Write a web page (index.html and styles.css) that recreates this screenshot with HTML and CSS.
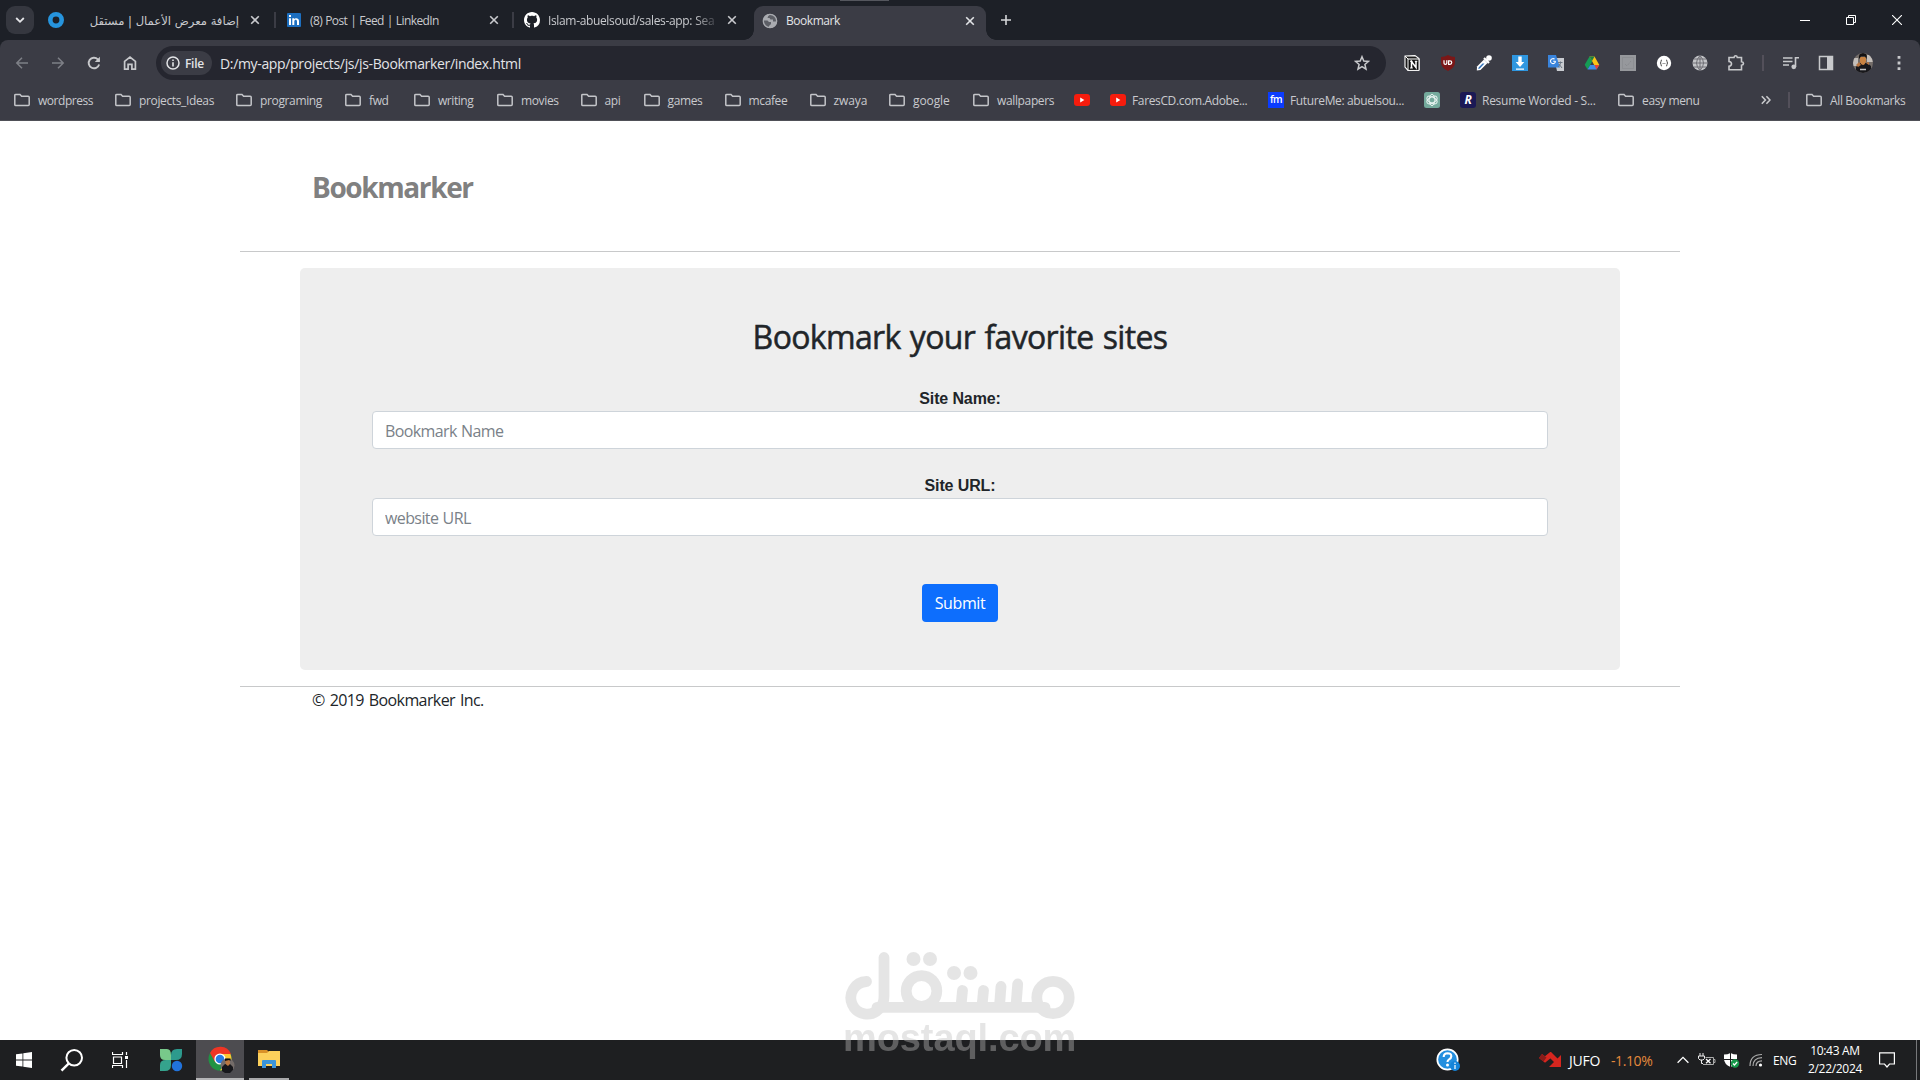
FILE: index.html
```html
<!DOCTYPE html>
<html lang="en">
<head>
<meta charset="utf-8">
<title>Bookmark</title>
<link rel="stylesheet" href="styles.css">
</head>
<body>
<svg class="defs" width="0" height="0">
  <symbol id="folder" viewBox="0 0 16 16"><path d="M.8 3.2V12.8Q.8 13.6 1.8 13.6H14.2Q15.200 13.6 15.200 12.6V5.200Q15.200 4.2 14.2 4.2H7.6L6 2.4H1.8Q.8 2.4 .8 3.2Z" fill="none" stroke="#c4c5c9" stroke-width="1.5"/></symbol>
  <symbol id="close" viewBox="0 0 10 10"><path d="M1.2 1.2L8.8 8.8M8.8 1.2L1.2 8.8" stroke="currentColor" stroke-width="1.6"/></symbol>
  <symbol id="youtube" viewBox="0 0 16 16"><rect y="2" width="16" height="12" rx="3" fill="#f61c0d"/><path d="M6.2 5.6V10.4L10.4 8Z" fill="#fff"/></symbol>
</svg>
<div class="screen">
  <header class="browser">
    <div class="tabs">
      <button class="tab-search"><svg width="10" height="8" viewBox="0 0 10 8"><path d="M1.2 2L5 5.8L8.8 2" fill="none" stroke="#e4e5e8" stroke-width="1.8"/></svg></button>
      <div class="tab tab-a">
        <svg width="16" height="16" viewBox="0 0 16 16"><circle cx="8" cy="8" r="5.7" fill="none" stroke="#2694dd" stroke-width="4.6"/></svg>
        <span class="tab-title rtl" dir="rtl">إضافة معرض الأعمال | مستقل</span>
        <svg class="x" width="10" height="10"><use href="#close"/></svg>
      </div>
      <div class="tab tab-b">
        <svg width="14" height="14" viewBox="0 0 14 14"><rect width="14" height="14" rx="1" fill="#1d6fc0"/><path d="M2 5.3H4V12H2ZM2 2H4V4H2ZM5.3 5.3H7.2V6.3C8.2 4.6 12 4.7 12 8V12H10V8.4C10 6.2 7.3 6.3 7.3 8.4V12H5.3Z" fill="#fff"/></svg>
        <span class="tab-title t-linkedin">(8) Post | Feed | LinkedIn</span>
        <svg class="x" width="10" height="10"><use href="#close"/></svg>
      </div>
      <div class="tab tab-c">
        <svg width="16" height="16" viewBox="0 0 16 16"><path fill="#fff" d="M8 0C3.58 0 0 3.58 0 8c0 3.54 2.29 6.53 5.47 7.59.4.07.55-.17.55-.38 0-.19-.01-.82-.01-1.49-2.01.37-2.53-.49-2.69-.94-.09-.23-.48-.94-.82-1.13-.28-.15-.68-.52-.01-.53.63-.01 1.08.58 1.23.82.72 1.21 1.87.87 2.33.66.07-.52.28-.87.51-1.07-1.78-.2-3.64-.89-3.64-3.95 0-.87.31-1.59.82-2.15-.08-.2-.36-1.02.08-2.12 0 0 .67-.21 2.2.82.64-.18 1.32-.27 2-.27s1.36.09 2 .27c1.53-1.04 2.2-.82 2.2-.82.44 1.1.16 1.92.08 2.12.51.56.82 1.27.82 2.15 0 3.07-1.87 3.75-3.65 3.95.29.25.54.73.54 1.48 0 1.07-.01 1.93-.01 2.2 0 .21.15.46.55.38A8.01 8.01 0 0 0 16 8c0-4.42-3.58-8-8-8Z"/></svg>
        <span class="tab-title t-github">Islam-abuelsoud/sales-app: Sea</span>
        <svg class="x" width="10" height="10"><use href="#close"/></svg>
      </div>
      <div class="tab tab-active">
        <svg width="16" height="16" viewBox="0 0 16 16"><circle cx="8" cy="8" r="7" fill="#a9abb0"/><path d="M8.500 1.200Q5.500 3 5.500 5H7.500L8.500 6.500H11V8.500H13.500L15 8A7 7 0 0 0 9 1.100Z" fill="#5d5f66"/><path d="M1.200 7.500H5.500L7 9H9V11L7 13V15A7 7 0 0 1 1.200 7.500Z" fill="#5d5f66"/><circle cx="8" cy="8" r="6.700" fill="none" stroke="#a9abb0" stroke-width="1.300"/></svg>
        <span class="tab-title t-active">Bookmark</span>
        <svg class="x" width="10" height="10"><use href="#close"/></svg>
      </div>
      <svg class="new-tab" width="12" height="12" viewBox="0 0 12 12"><path d="M6 1V11M1 6H11" stroke="#d5d6d9" stroke-width="1.6"/></svg>
      <div class="window-buttons">
        <svg width="10" height="10"><path d="M0 5.5H10" stroke="#fff"/></svg>
        <svg width="10" height="10"><path d="M.5 2.5H7.5V9.5H.5ZM2.5 2.5V.5H9.5V7.5H7.5" fill="none" stroke="#fff"/></svg>
        <svg width="10" height="10"><path d="M0 0L10 10M10 0L0 10" stroke="#fff" stroke-width="1.1"/></svg>
      </div>
      <i class="grip"></i>
    </div>
    <div class="toolbar">
      <nav class="nav">
        <svg width="16" height="16" viewBox="0 0 16 16"><path d="M14 8H3M8 2.8L2.8 8L8 13.2" fill="none" stroke="#7e8087" stroke-width="1.5"/></svg>
        <svg width="16" height="16" viewBox="0 0 16 16"><path d="M2 8H13M8 2.8L13.2 8L8 13.2" fill="none" stroke="#7e8087" stroke-width="1.5"/></svg>
        <svg width="16" height="16" viewBox="0 0 16 16"><path d="M13.1 9.4A5.3 5.3 0 1 1 11.8 4.3L13.3 5.8" fill="none" stroke="#c8c9cc" stroke-width="1.9"/><path d="M13.9 1.8V6.9H8.8Z" fill="#c8c9cc"/></svg>
        <svg width="16" height="16" viewBox="0 0 16 16"><path d="M2.6 6.3L8 2L13.4 6.3V14.2H9.9V9.4H6.1V14.2H2.6Z" fill="none" stroke="#c8c9cc" stroke-width="1.7"/></svg>
      </nav>
      <div class="address">
        <span class="chip"><svg width="14" height="14" viewBox="0 0 14 14"><circle cx="7" cy="7" r="6" fill="none" stroke="#e3e4e7" stroke-width="1.5"/><path d="M7 6.2V10.4M7 3.5V5" stroke="#e3e4e7" stroke-width="1.6"/></svg><b>File</b></span>
        <span class="url">D:/my-app/projects/js/js-Bookmarker/index.html</span>
        <svg class="star" width="16" height="16" viewBox="0 0 16 16"><path d="M8 1.7L9.8 6L14.5 6.4L10.9 9.5L12 14.1L8 11.6L4 14.1L5.1 9.5L1.5 6.4L6.2 6Z" fill="none" stroke="#c8c9cc" stroke-width="1.5"/></svg>
      </div>
      <div class="extensions">
        <svg width="16" height="16" viewBox="0 0 16 16"><path d="M1 1L11 .6L15 3.500V15L4 15.400L1 12Z" fill="#1b1b1b" stroke="#fff" stroke-width="1.1"/><path d="M1 1L4 4H15V15.400H4V4" fill="#111" stroke="#fff"/><path d="M7.500 13V6.5L12 12.5V6" stroke="#fff" stroke-width="1.5" fill="none"/><path d="M6 6.300H8.500M10.800 6.300H13.300M6 13H8.800" stroke="#fff"/></svg>
        <svg width="16" height="16" viewBox="0 0 16 16"><path d="M8 0Q11 2 15 2V7Q15 13 8 16Q1 13 1 7V2Q5 2 8 0Z" fill="#7b1717"/><path d="M4 5.3V8.3Q4 9.3 5.400 9.3Q6.8 9.3 6.8 8.3V5.3M8.600 5.800H10A1.700 1.700 0 0 1 10 9.300H8.600Z" fill="none" stroke="#fff" stroke-width="1.2"/></svg>
        <svg width="16" height="16" viewBox="0 0 16 16"><path d="M8 4.500L11.500 8L4.500 15L.8 15.600L1 11.500Z" fill="#fff"/><path d="M6.500 8.500H8.500L3.800 13.500L2.300 14L2.600 12.4Z" fill="#2f70b8"/><path d="M8 3L13 8M9.8 6.2L13.5 2.5" stroke="#fff" stroke-width="2.200"/><circle cx="13" cy="3" r="2.8" fill="#fff"/></svg>
        <svg width="16" height="16" viewBox="0 0 16 16"><path fill="#2f97e0" d="M0 0H16V16H0Z"/><path d="M6.300 1.500H9.700V7H12.300L8 12L3.700 7H6.300ZM4 13.500H12V14.700H4Z" fill="#fff"/></svg>
        <svg width="16" height="16" viewBox="0 0 16 16"><path d="M6 3H16V16H9Z" fill="#c9ccd1"/><path d="M0 0H8L12 12.500H0Z" fill="#3984dc"/><path d="M7.500 6.200H5.200M7.500 6.200A2.5 2.5 0 1 1 6.600 4.200" fill="none" stroke="#fff" stroke-width="1.1"/><path d="M10 7.500H14.5M12.5 6.500V8Q12 11 10 12M11 9L14 13" stroke="#6b7683" fill="none"/></svg>
        <svg width="16" height="16" viewBox="0 0 16 16"><path d="M5.5 1.500L8.2 6.5L3.5 14.5L.7 9.8Z" fill="#159c55"/><path d="M5.5 1.500H10.5L15.3 10H10.200Z" fill="#fbc316"/><path d="M5.500 1.500H10.500L8 6Z" fill="#1b8046"/><path d="M6.2 10H15.3L12.5 14.5H3.5Z" fill="#3f8de8"/><path d="M10.5 10H15.3L12.5 14.5Z" fill="#e94235"/></svg>
        <svg width="16" height="16" viewBox="0 0 16 16"><path fill="#96989c" d="M0 0H16V16H0Z"/><path d="M2.5 2.5H13.5V13.5H2.5ZM5 9L7 11L11 6" stroke="#85878b" fill="none" stroke-dasharray="1 1"/></svg>
        <svg width="16" height="16" viewBox="0 0 16 16"><circle cx="8" cy="8" r="7.2" fill="#fff"/><path d="M6 5Q4.8 5 5 6.5Q5 8 4 8Q5 8 5 9.5Q4.8 11 6 11M10 5Q11.2 5 11 6.5Q11 8 12 8Q11 8 11 9.5Q11.2 11 10 11M6.700 8.500H7.500M8.500 8.500H9.300" fill="none" stroke="#444"/></svg>
        <svg width="16" height="16" viewBox="0 0 16 16"><circle cx="8" cy="8" r="7.5" fill="#c3c4c7"/><path d="M8 0V16M0 8H16M2 4H14M2 12H14M8 .5Q1 8 8 15.5Q15 8 8 .5" fill="none" stroke="#66686e" stroke-width=".9"/></svg>
        <svg width="18" height="18" viewBox="0 0 18 18"><path d="M2 3.500H7Q7.3 1.8 8.7 1.8Q10 1.8 10.3 3.500H14.500V7.800Q16.500 8 16.500 9.500Q16.500 11 14.500 11.200V15.800H2V12.3Q4.500 12 4.500 9.800Q4.500 7.800 2 7.5Z" fill="none" stroke="#c8c9cc" stroke-width="1.6"/></svg>
      </div>
      <i class="sep sep-tools"></i>
      <div class="profile">
        <svg width="16" height="16" viewBox="0 0 16 16"><path d="M0 3H9.5M0 6.5H9.5M0 10H6M12.500 12V2.8H16" stroke="#c8c9cc" stroke-width="1.6" fill="none"/><circle cx="10.8" cy="11.8" r="2.4" fill="#c8c9cc"/></svg>
        <svg width="16" height="16" viewBox="0 0 16 16"><path d="M1.5 1.5H14.5V14.5H1.5Z" fill="none" stroke="#c8c9cc" stroke-width="1.5"/><path d="M9 1H15V15H9Z" fill="#c8c9cc"/></svg>
        <svg class="avatar" width="20" height="20" viewBox="0 0 20 20"><path fill="#746d69" d="M0 0H20V20H0Z"/><path d="M0 5H5V13H0ZM14 2H20V9H14Z" fill="#c4bfbb"/><path d="M3 20V14L7 10H14L18 13V20Z" fill="#17171b"/><path d="M7 4H13V8Q12 12 10 12Q7 11 7 8Z" fill="#c98342"/><path d="M6 6Q5 0 10 0Q15 0 13.5 6L12 3.6H8Z" fill="#141212"/><path d="M3 12L6 9L8 12L5 14ZM13 10L16 9L16 12Z" fill="#b87440"/><path d="M7 16.500H13" stroke="#c2c2c2" stroke-width="1.300"/></svg>
        <svg class="dots" width="4" height="16" viewBox="0 0 4 16"><path d="M.6 1H3.4V3.8H.6ZM.6 6.6H3.4V9.4H.6ZM.6 12.2H3.4V15H.6Z" fill="#c8c9cc"/></svg>
      </div>
    </div>
    <div class="bookmarks">
      <div class="bookmark-list">
        <a><svg><use href="#folder"/></svg><span class="tight">wordpress</span></a>
        <a><svg><use href="#folder"/></svg><span>projects_Ideas</span></a>
        <a><svg><use href="#folder"/></svg><span>programing</span></a>
        <a><svg><use href="#folder"/></svg><span>fwd</span></a>
        <a><svg><use href="#folder"/></svg><span class="tight">writing</span></a>
        <a><svg><use href="#folder"/></svg><span>movies</span></a>
        <a><svg><use href="#folder"/></svg><span>api</span></a>
        <a><svg><use href="#folder"/></svg><span>games</span></a>
        <a><svg><use href="#folder"/></svg><span>mcafee</span></a>
        <a><svg><use href="#folder"/></svg><span class="roomy">zwaya</span></a>
        <a><svg><use href="#folder"/></svg><span class="roomy">google</span></a>
        <a><svg><use href="#folder"/></svg><span>wallpapers</span></a>
        <a><svg><use href="#youtube"/></svg></a>
        <a class="site"><svg><use href="#youtube"/></svg><span>FaresCD.com.Adobe...</span></a>
        <a class="site"><em class="fm">fm</em><span>FutureMe: abuelsou...</span></a>
        <a><svg viewBox="0 0 16 16"><rect width="16" height="16" rx="2.5" fill="#74aa9c"/><g fill="none" stroke="#e8f3f0" stroke-width="1"><ellipse cx="8" cy="8" rx="2.9" ry="5.6"/><ellipse cx="8" cy="8" rx="2.9" ry="5.6" transform="rotate(60 8 8)"/><ellipse cx="8" cy="8" rx="2.9" ry="5.6" transform="rotate(120 8 8)"/></g></svg></a>
        <a class="site"><em class="rw">R</em><span class="resume">Resume Worded - S...</span></a>
        <a><svg><use href="#folder"/></svg><span>easy menu</span></a>
      </div>
      <svg class="more" width="10" height="10" viewBox="0 0 10 10"><path d="M.8 1.2L4.4 5L.8 8.8M5.4 1.2L9 5L5.4 8.8" fill="none" stroke="#c8c9cc" stroke-width="1.6"/></svg>
      <i class="sep sep-marks"></i>
      <a class="all"><svg><use href="#folder"/></svg><span>All Bookmarks</span></a>
    </div>
  </header>

  <main class="page">
    <div class="container">
      <div class="masthead"><h3>Bookmarker</h3></div>
      <form class="panel">
        <h2>Bookmark your favorite sites</h2>
        <label for="name">Site Name:</label>
        <input id="name" type="text" placeholder="Bookmark Name">
        <label for="url">Site URL:</label>
        <input id="url" type="text" placeholder="website URL">
        <button type="button" class="submit">Submit</button>
      </form>
      <footer><p>© 2019 Bookmarker Inc.</p></footer>
    </div>
  </main>

  <div class="taskbar">
    <div class="apps">
      <span><svg width="16" height="16" viewBox="0 0 16 16"><path d="M0 2.3L6.5 1.4V7.6H0ZM7.3 1.3L16 0V7.6H7.3ZM0 8.4H6.5V14.6L0 13.7ZM7.3 8.4H16V16L7.3 14.7Z" fill="#fff"/></svg></span>
      <span><svg width="24" height="24" viewBox="0 0 24 24"><circle cx="14.2" cy="9.8" r="7.8" fill="none" stroke="#fff" stroke-width="2"/><path d="M8.6 15.6L1.5 22.7" stroke="#fff" stroke-width="2.4"/></svg></span>
      <span><svg width="16" height="16" viewBox="0 0 16 16"><path d="M.5 0V2.5H10.5V0M1.5 5H9.5V11.5H1.5ZM.5 16V13.5H10.5V16M14.5 0V3M14.5 8V16" fill="none" stroke="#fff" stroke-width="1.2"/><path d="M13 4H16V7H13Z" fill="#fff"/></svg></span>
      <span><svg width="24" height="24" viewBox="0 0 24 24"><path d="M1 1H8Q12 1 12 7V12H6Q1 12 1 7Z" fill="#78c98a"/><path d="M23 1V6Q23 12 17 12H12V7Q12 1 18 1Z" fill="#2d9a8d"/><path d="M1 23V17Q1 12 7 12H12V17Q12 23 6 23Z" fill="#35a38d"/><circle cx="18" cy="18" r="5.2" fill="#2173dc"/></svg></span>
      <span class="current"><svg width="28" height="28" viewBox="0 0 28 28"><circle cx="13" cy="13" r="11.5" fill="#209344"/><path d="M3 7A11.5 11.5 0 0 1 24 8H13L8 16Z" fill="#ee3525"/><path d="M13 8H23.4A11.5 11.5 0 0 1 13 24.5L18 16Z" fill="#fac633"/><circle cx="13" cy="13" r="5.6" fill="#fff"/><circle cx="13" cy="13" r="4.3" fill="#287ce5"/><circle cx="20.5" cy="19.5" r="7" fill="#746c69"/><path d="M15 25V21L18 18H23L26 21V24L23 27H18Z" fill="#17171b"/><path d="M18.5 14H23V18L21 20L18.5 18Z" fill="#ba773f"/><path d="M18 15V12.5H23.5V15L22 14Z" fill="#151212"/></svg></span>
      <span class="open"><svg width="22" height="20" viewBox="0 0 22 20"><path d="M0 1H9L11 3V8H0Z" fill="#d99128"/><path d="M0 4H9L11 2H22V17H0Z" fill="#fcd05b"/><path d="M4 19V12Q4 11 5 11H17Q18 11 18 12V19H14V15H8V19Z" fill="#3b94d9"/></svg></span>
    </div>
    <div class="tray">
      <svg class="help" width="24" height="24" viewBox="0 0 24 24"><circle cx="11.5" cy="11.5" r="10.2" fill="#248fdf" stroke="#fff" stroke-width="1.7"/><path d="M7.7 9Q7.7 5.2 11.5 5.2Q15.4 5.3 15.3 8.4Q15.2 10.5 12.8 11.6Q11.5 12.4 11.5 14" fill="none" stroke="#fff" stroke-width="2.1"/><circle cx="11.5" cy="17" r="1.5" fill="#fff"/><circle cx="19" cy="18" r="5" fill="#1684d9"/><path d="M19 17V21M19 14.6V16" stroke="#fff" stroke-width="1.2"/></svg>
      <svg class="stock" width="24" height="16" viewBox="0 0 24 16"><path d="M2.500 4L7 7.500L12.500 3L19 9.500" fill="none" stroke="#d5261f" stroke-width="5"/><path d="M2.500 4L7 7.500" stroke="#861c1a" stroke-width="5"/><path d="M23 3V15H11Z" fill="#d5261f"/></svg>
      <span class="ticker">JUFO</span><span class="change">-1.10%</span>
      <svg class="up" width="12" height="8" viewBox="0 0 12 8"><path d="M.6 6.8L6 1.4L11.4 6.8" stroke="#fff" fill="none" stroke-width="1.3"/></svg>
      <svg class="battery" width="18" height="14" viewBox="0 0 18 14"><path d="M2 0V3M5 0V3M.5 3H6.5V5.5L5 7H2L.5 5.5ZM3.5 7V10.500H5" stroke="#eee" fill="none"/><path d="M7.5 4.5H15.5V11.500H5M15.5 6.5H17V9.5H15.5" stroke="#aaa" fill="none"/><path d="M8 6L12.5 10.300M12.5 6L8 10.300" stroke="#fff" stroke-width="1.200"/></svg>
      <svg class="shield" width="17" height="17" viewBox="0 0 17 17"><path d="M7.5 1Q10.5 2.6 14 2.6V7Q14 12 7.5 15Q1 12 1 7V2.6Q4.5 2.6 7.5 1Z" fill="#fff"/><path d="M7.5 1V15M1 7.5H14" stroke="#1c1d1f"/><circle cx="12" cy="11.5" r="4.2" fill="#16984a"/><path d="M10 11.5L11.4 13L14.2 10" stroke="#fff" fill="none" stroke-width="1.2"/></svg>
      <svg class="wifi" width="14" height="14" viewBox="0 0 14 14"><path d="M1 13Q1 1.5 13 1.5M4 13Q4 5 13 4.7M7 13Q7 8 13 7.8" stroke="#aaa" fill="none" stroke-width="1.2"/><circle cx="11.5" cy="12" r="1.6" fill="#fff"/></svg>
      <span class="lang">ENG</span>
      <div class="clock"><span>10:43 AM</span><span>2/22/2024</span></div>
      <svg class="notice" width="16" height="16" viewBox="0 0 16 16"><path d="M.6.8H15.4V12H10.5L8 15L5.5 12H.6Z" stroke="#fff" fill="none" stroke-width="1.2"/></svg>
      <i class="desktop-edge"></i>
    </div>
  </div>

  <div class="watermark">
    <svg width="230" height="68" viewBox="0 0 230 68"><g fill="none" stroke="#c0c0c0" stroke-width="10.8" stroke-linecap="round" stroke-linejoin="round"><path d="M21.5 29.5A16.3 16.3 0 1 0 34 57Q39 53 39 44V5.5"/><path d="M32 55.4H200"/><circle cx="76.5" cy="39" r="15.3"/><circle cx="208" cy="45.5" r="16.2"/><path d="M116 54L117.5 38.5M137 54L138.5 38.5M154.500 54L156 34.500M171 54L172.700 32"/></g><g fill="#c0c0c0"><circle cx="68.500" cy="7" r="7"/><circle cx="85" cy="7" r="7"/><circle cx="109" cy="21" r="7"/><circle cx="125.500" cy="21" r="7"/></g></svg>
    <span>mostaql.com</span>
  </div>
</div>
</body>
</html>
```
FILE: styles.css
```css
* { box-sizing: border-box; }
body { margin: 0; background: #fff; font-family: "Open Sans", "Noto Sans", sans-serif; }
svg { display: block; flex: none; }
.defs { position: absolute; }
.screen { position: relative; width: 1920px; height: 1080px; overflow: hidden; display: flex; flex-direction: column; }

/* browser frame */
.browser { height: 121px; flex: none; background: #1d2027; border-bottom: 1px solid #4f5057; font-size: 12px; color: #c9cace; }
.tabs { position: relative; height: 40px; display: flex; align-items: center; }
.tab-search { width: 28px; height: 28px; margin: 0 8px 0 6px; padding: 0; border: 0; border-radius: 9px; background: #35373f; display: grid; place-items: center; }
.tab { display: flex; align-items: center; height: 16px; }
.tab-title { white-space: nowrap; line-height: 18px; padding-top: 1px; letter-spacing: -.6px; word-spacing: .5px; color: #c9cace; }
.x { margin-left: auto; color: #c9cace; }
.tab-a { width: 234px; padding: 0 14px 0 6px; border-right: 2px solid #3b3c45; }
.rtl { width: 156px; margin-left: 19px; font-family: "DejaVu Sans", sans-serif; font-size: 11.6px; letter-spacing: 0; word-spacing: 0; }
.tab-b { width: 238px; padding: 0 13px 0 11px; border-right: 2px solid #3b3c45; }
.t-linkedin { margin-left: 9px; }
.tab-c { width: 240px; padding: 0 17px 0 10px; }
.t-github { margin-left: 8px; letter-spacing: -.35px; mask-image: linear-gradient(90deg, #000 88%, rgba(0, 0, 0, .25)); }
.tab-active { position: relative; width: 232px; height: 34px; align-self: flex-end; padding: 0 11px 4px 8px; border-radius: 9px 9px 0 0; background: #3b3c45; }
.tab-active::before, .tab-active::after { content: ""; position: absolute; bottom: 0; width: 10px; height: 10px; }
.tab-active::before { left: -10px; background: radial-gradient(circle at 0 0, #1d2027 9.5px, #3b3c45 10px); }
.tab-active::after { right: -10px; background: radial-gradient(circle at 100% 0, #1d2027 9.5px, #3b3c45 10px); }
.t-active { margin-left: 8px; padding: 0; color: #e3e4e7; letter-spacing: -.45px; }
.tab-active .x { color: #e3e4e7; }
.new-tab { margin-left: 14px; }
.window-buttons { display: flex; gap: 36px; margin: 0 18px 0 auto; }
.grip { position: absolute; left: 840px; top: 0; width: 49px; height: 1px; background: #55575e; }
.toolbar { height: 46px; background: #3b3c45; border-radius: 8px 8px 0 0; display: flex; align-items: center; }
.nav { display: flex; gap: 20px; margin-left: 14px; width: 142px; }
.address { width: 1230px; height: 34px; border-radius: 17px; background: #25262f; display: flex; align-items: center; padding: 0 16px 0 5px; }
.chip { width: 51px; height: 24px; border-radius: 12px; background: #3b3c45; display: flex; align-items: center; gap: 5px; padding-left: 5px; color: #e3e4e7; }
.chip b { font-weight: 600; letter-spacing: -.3px; }
.url { margin-left: 8px; font-size: 14px; letter-spacing: -.34px; color: #e3e4e7; white-space: nowrap; }
.star { margin-left: auto; }
.extensions { display: flex; gap: 20px; align-items: center; margin-left: 18px; }
.extensions svg:last-child { margin-left: -1px; }
.sep { width: 2px; height: 16px; background: #53505a; }
.sep-tools { margin-left: 17px; }
.profile { display: flex; align-items: center; margin-left: 19px; gap: 19px; }
.avatar { border-radius: 50%; }
.dots { margin-left: 5px; }
.bookmarks { height: 34px; padding-bottom: 6px; background: #3b3c45; display: flex; align-items: center; }
.bookmarks a { display: flex; align-items: center; gap: 8px; white-space: nowrap; letter-spacing: -.36px; }
.bookmarks .roomy { letter-spacing: -.1px; }
.bookmarks .tight { letter-spacing: -.45px; }
.bookmarks .resume { letter-spacing: -.27px; }
.bookmarks a svg { width: 16px; height: 16px; }
.bookmarks a.site { gap: 6px; }
.bookmark-list { margin-left: 14px; width: 1747px; display: grid; grid-template-columns: 101px 121px 109px 69px 83px 83.5px 63px 81px 85px 79.5px 84px 101px 36px 158px 156px 36px 158px 100px; }
.bookmarks em { width: 16px; height: 16px; flex: none; text-align: center; font: 700 10px/15px "Open Sans", sans-serif; color: #fff; }
.bookmarks .fm { background: #0b3cff; font-weight: 600; letter-spacing: -.5px; }
.bookmarks .rw { background: #1b1955; border-radius: 3px; font-style: italic; font-size: 12px; }
.sep-marks { margin: 0 16px 0 17px; }

/* document */
.page { height: 919px; flex: none; background: #fff; color: #212529; }
.container { width: 1440px; margin: 0 auto; }
.masthead { height: 131px; border-bottom: 1px solid #c8c9ca; padding: 46px 72px 0; }
h3 { margin: 0; font-size: 28px; line-height: 40px; font-weight: 700; letter-spacing: -1.4px; color: #808080; }
.panel { margin: 16px 60px; height: 402px; background: #eee; border-radius: 5px; padding: 48px 72px; display: flex; flex-direction: column; align-items: center; }
h2 { margin: 0 0 29px; font-size: 32px; line-height: 42px; font-weight: 500; letter-spacing: -.65px; word-spacing: 1.5px; -webkit-text-stroke: .5px #212529; white-space: nowrap; }
label { font: 700 16px/23px "Liberation Sans", Arial, sans-serif; letter-spacing: -.12px; }
input { width: 100%; height: 38px; margin: 1px 0 25px; padding: 7px 12px 5px; border: 1px solid #ced4da; border-radius: 4px; background: #fff; font: 16px/24px "Open Sans", sans-serif; letter-spacing: -.6px; word-spacing: .7px; }
input::placeholder { color: #7a8188; opacity: 1; }
.submit { margin-top: 23px; width: 76px; height: 38px; border: 0; border-radius: 4px; background: #0d6efd; color: #fff; font: 16px/24px "Open Sans", sans-serif; letter-spacing: -.4px; padding: 0; }
footer { border-top: 1px solid #c8c9ca; padding: 0 72px; }
footer p { margin: 0; font-size: 16px; line-height: 26px; font-weight: 400; letter-spacing: -.6px; word-spacing: 1.4px; }

/* taskbar */
.taskbar { height: 40px; flex: none; background: #1e1f21; color: #fff; display: flex; justify-content: space-between; font-size: 12px; }
.apps { display: flex; }
.apps span { width: 48px; height: 40px; display: grid; place-items: center; }
.apps .current { width: 48px; margin-left: 4px; padding: 2px 0 0 2px; background: #4d4c50; border-bottom: 2px solid #b5b5b7; }
.apps .open { width: 40px; margin-left: 5px; border-bottom: 2px solid #a9a9ab; }
.apps span:nth-child(4) { margin-left: 3px; margin-right: -3px; }
.tray { display: flex; align-items: center; width: 484px; }
.stock { margin-left: 78px; }
.ticker { width: 34px; margin-left: 7px; font-size: 14px; letter-spacing: -.2px; }
.change { width: 44px; margin-left: 8px; font-size: 14px; letter-spacing: -.4px; color: #e58a3c; }
.up { margin-left: 22px; }
.battery { margin-left: 9px; }
.shield { margin-left: 7px; }
.wifi { margin-left: 9px; }
.lang { margin-left: 10px; width: 26px; letter-spacing: -.3px; }
.clock { width: 60px; margin-left: 6px; display: flex; flex-direction: column; text-align: center; line-height: 18px; letter-spacing: -.3px; }
.notice { margin-left: 14px; }
.desktop-edge { width: 1px; height: 40px; background: #77787a; margin-left: 21px; }

/* watermark over page and taskbar */
.watermark { position: absolute; left: 845px; top: 952px; width: 230px; opacity: .4; color: #c0c0c0; }
.watermark span { display: block; margin: -6px 0 0 -2px; font: 700 38px/48px "Liberation Sans", Arial, sans-serif; letter-spacing: -.1px; white-space: nowrap; }
```
